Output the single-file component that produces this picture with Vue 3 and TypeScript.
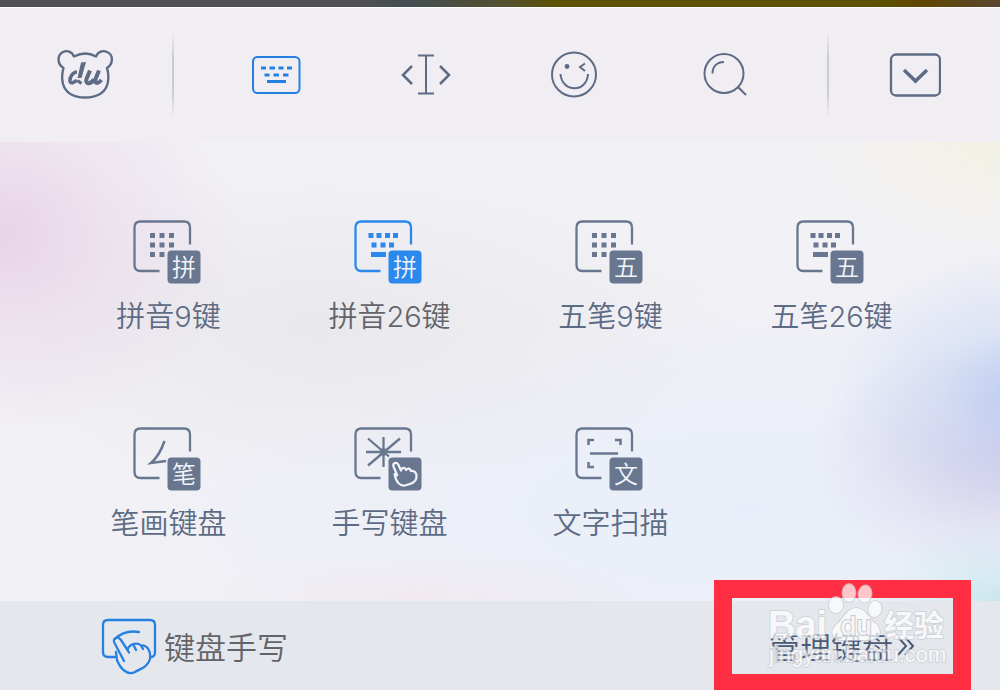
<script setup lang="ts">
type Glyph = 'nine' | 'full' | 'stroke' | 'star' | 'scan'

interface Mode {
  name: string
  glyph: Glyph
  badge: string
  active?: boolean
}

const modes: Mode[] = [
  { name: '拼音9键', glyph: 'nine', badge: '拼' },
  { name: '拼音26键', glyph: 'full', badge: '拼', active: true },
  { name: '五笔9键', glyph: 'nine', badge: '五' },
  { name: '五笔26键', glyph: 'full', badge: '五' },
  { name: '笔画键盘', glyph: 'stroke', badge: '笔' },
  { name: '手写键盘', glyph: 'star', badge: '' },
  { name: '文字扫描', glyph: 'scan', badge: '文' },
]
</script>

<template>
  <main class="keyboard">
    <div class="strip"></div>

    <nav class="toolbar" aria-label="工具栏">
      <button class="tool" aria-label="百度输入法">
        <svg width="58" height="52" viewBox="0 0 58 52" fill="none" stroke="currentColor">
          <path
            d="M17 7.500C25 3.500 32 3.500 39 7.500C41 2.500 46 1 50 3C57 6 56 15 50 19C51.500 24 52 29 50.500 35C47.500 45 38 48.500 28 48.500C18 48.500 9 45 6 35C4.500 29 5 24 6.500 19C0 15 0 6 6 3C10 1 15 2.500 17 7.500Z"
            stroke-width="2.400" stroke-linejoin="round" />
          <path d="M20 23C16 23 12.500 28 13 32C13.500 35 17 34 20 31" stroke-width="3.600" />
          <path d="M24 13.500L29 13L24.500 29H20.500Z" fill="currentColor" stroke="none" />
          <path d="M20.500 31.500L24.500 34.500" stroke-width="3" />
          <path d="M33 21.500L29.500 30C28 35 33 36 37 30.500M42 21.500L38.500 30C37 35 41 35 44.500 31" stroke-width="4" />
        </svg>
      </button>
      <span class="divider"></span>
      <div class="tools">
        <button class="tool active" aria-label="键盘">
          <svg width="50" height="40" viewBox="0 0 50 40" fill="none" stroke="currentColor">
            <rect x="2" y="2" width="46.500" height="36" rx="4.500" stroke-width="2" />
            <path d="M10 13h5M18.500 13h5.500M27.500 13h5M36 13h5M13.500 20h5M22.500 20h5.500M32 20h5.500" stroke-width="3" />
            <path d="M16 26.500h19" stroke-width="3" />
          </svg>
        </button>
        <button class="tool" aria-label="移动光标">
          <svg width="50" height="42" viewBox="0 0 50 42" fill="none" stroke="currentColor" stroke-width="2">
            <path d="M17 1.500h16M25 1.500v38M17 39.500h16" />
            <path d="M11 12L2 21L11 30M39 12L48 21L39 30" stroke-width="2.500" />
          </svg>
        </button>
        <button class="tool" aria-label="表情">
          <svg width="48" height="48" viewBox="0 0 48 48" fill="none" stroke="currentColor" stroke-width="2">
            <circle cx="23" cy="23.500" r="22" />
            <path d="M9.500 23C11 42 36 42 37 23" />
            <circle cx="16" cy="15.500" r="2.400" fill="currentColor" stroke="none" />
            <path d="M34 12.500L29 16L34 20" />
          </svg>
        </button>
        <button class="tool" aria-label="搜索">
          <svg width="44" height="44" viewBox="0 0 44 44" fill="none" stroke="currentColor" stroke-width="2">
            <circle cx="21" cy="20.500" r="19.500" />
            <path d="M9.500 20.500C9.500 13.500 14 9 21 9M35 34L43 42" />
          </svg>
        </button>
      </div>
      <span class="divider"></span>
      <button class="tool" aria-label="收起键盘">
        <svg width="52" height="44" viewBox="0 0 52 44" fill="none" stroke="currentColor">
          <rect x="2" y="1.500" width="49" height="41" rx="5" stroke-width="2.300" />
          <path d="M15 17L26.500 28L38 17" stroke-width="3.500" />
        </svg>
      </button>
    </nav>

    <section class="panel">
      <button v-for="mode in modes" :key="mode.name" class="mode" :class="{ active: mode.active }">
        <svg class="mode-icon" width="72" height="64" viewBox="0 0 72 64" fill="none" stroke="currentColor">
          <path d="M57 24.500V7.500Q57 1.500 51 1.500H7.500Q1.500 1.500 1.500 7.500V45Q1.500 51 7.500 51H26.500" stroke-width="2.300" />
          <path
            v-if="mode.glyph === 'nine'"
            d="M17 15.500h5M26.500 15.500h5M36 15.500h5M17 25h5M26.500 25h5M36 25h5M17 34.500h5M26.500 34.500h5"
            stroke-width="5" />
          <path
            v-else-if="mode.glyph === 'full'"
            d="M14.500 15.500h5M22.500 15.500h5M31 15.500h5M39 15.500h5M17.500 25h5M26.500 25h5M35 25h5M17 34.500h15"
            stroke-width="5" />
          <path v-else-if="mode.glyph === 'stroke'" d="M31.500 14C28 24 24 31 18 36L33 34" stroke-width="2.500" />
          <g v-else-if="mode.glyph === 'star'" stroke-width="2.300">
            <path d="M29.500 10V40M12 25H47M14 11.500L35 29.500M46 11.500L14 38.500" />
            <circle cx="29.500" cy="25" r="2.500" fill="currentColor" />
          </g>
          <path
            v-else
            d="M13.500 18V13H19M40 13H45.500V18M13.500 35V40H19M15 26.500H43"
            stroke-width="2.500" />
          <rect x="34.500" y="30.500" width="33" height="33" rx="4" fill="currentColor" stroke="none" />
          <text v-if="mode.badge" class="badge" x="51" y="56" text-anchor="middle">{{ mode.badge }}</text>
          <path
            v-else
            class="hand"
            d="M43.500 49L39.500 39.500C38.500 35.500 43 34.500 44.500 38L47 43.500C48 40 51 40 52 43C54 40.500 56 41.500 57 44C60 43 63 46 62.500 50C62 56 56 57 51 58.500C46 59.500 42 55 40.500 47L44 48.500" />
        </svg>
        <span>{{ mode.name }}</span>
      </button>
    </section>

    <footer class="footer">
      <button class="foot handwriting">
        <svg width="56" height="58" viewBox="0 0 56 58" fill="none" stroke="currentColor" stroke-width="2.300" stroke-linecap="round" stroke-linejoin="round">
          <path d="M14 40H7Q2 40 2 35V8Q2 3 7 3H49Q54 3 54 8V35Q54 40 50 40" />
          <path d="M14 22C20 16 29 13.500 38 15" />
          <path d="M23 44L13.500 26C11 21 17 18.500 20 23L26.500 33C28 27 36 25 40 28.500C47 28 50 35 49 42C47 50 39 52 34 55C26 59 19 51 16 43L15 35M26.500 33L28 35.500M33 29L35 33M40 28.500L42 32" />
        </svg>
        <span>键盘手写</span>
      </button>
      <button class="foot manage">
        <span>管理键盘</span>
        <svg width="18" height="22" viewBox="0 0 18 22" fill="none" stroke="currentColor" stroke-width="2">
          <path d="M1 2L9 11L1 20M8 2L16 11L8 20" />
        </svg>
      </button>
    </footer>

    <div class="highlight"></div>
    <svg class="watermark" width="184" height="96" viewBox="0 0 184 96" role="img" aria-label="Baidu 经验">
      <g class="mark">
        <text class="brand" x="3" y="60">Bai</text>
        <ellipse cx="71" cy="27" rx="7" ry="8" />
        <ellipse cx="84" cy="15" rx="6.500" ry="9" />
        <ellipse cx="100" cy="16" rx="6.500" ry="8.500" transform="rotate(8 100 16)" />
        <ellipse cx="110" cy="31" rx="6.500" ry="8" transform="rotate(12 110 31)" />
        <path d="M91 30C81 31 80 40 72 46C64 53 67 62 77 62H104C115 62 118 53 111 46C103 40 102 31 91 30Z" />
        <text class="cn" x="119" y="58">经验</text>
        <text class="url" x="4" y="84">jingyan.baidu.com</text>
      </g>
      <text class="du" x="91" y="57" text-anchor="middle">du</text>
    </svg>
  </main>
</template>

<style>
body {
  margin: 0;
}
</style>

<style scoped>
.keyboard {
  position: relative;
  display: flex;
  flex-direction: column;
  min-height: 100vh;
  overflow: hidden;
  color: #5d6b84;
  font-family: Inter, "Noto Sans CJK SC", sans-serif;
  font-weight: 350;
}
button {
  display: flex;
  align-items: center;
  justify-content: center;
  margin: 0;
  padding: 0;
  border: 0;
  background: none;
  color: inherit;
  font: inherit;
  cursor: pointer;
}
svg {
  display: block;
  flex: none;
}
.strip {
  height: 7px;
  background: linear-gradient(90deg, #505154 0 36%, #444d52 41%, #55502c 51%, #5c5200 56% 87%, #604700 92%, #5b4632);
}
.toolbar {
  display: grid;
  grid-template-columns: 172fr 2px 653fr 2px 171fr;
  height: 135px;
  box-sizing: border-box;
  border-top: 1px solid #fff;
  background: #f0eef3;
}
.tools {
  display: grid;
  grid-template-columns: repeat(4, 1fr);
  padding: 0 27px;
}
.divider {
  align-self: center;
  height: 86px;
  background: linear-gradient(transparent, #cbcace 30% 70%, transparent);
}
.active {
  color: #2680e2;
}
.panel {
  flex: 1;
  display: grid;
  grid-template-columns: repeat(4, 1fr);
  grid-auto-rows: 207px;
  padding: 42px 58px 0;
  background:
    radial-gradient(ellipse 240px 200px at 0 20%, #e8d3e7, rgba(232, 211, 231, 0.45) 45%, rgba(232, 211, 231, 0)),
    radial-gradient(ellipse 200px 150px at 103% 55%, #b9cbf1, rgba(190, 208, 244, 0.4) 45%, rgba(195, 213, 245, 0)),
    radial-gradient(ellipse 200px 110px at 100% 0, #f3f1e4, rgba(243, 241, 228, 0.5) 45%, rgba(243, 241, 228, 0)),
    radial-gradient(ellipse 130px 80px at 100% 100%, #c9e7ec, rgba(205, 234, 240, 0.5) 45%, rgba(205, 234, 240, 0)),
    radial-gradient(ellipse 190px 120px at 100% 69%, #d8cfe8, rgba(216, 207, 232, 0.45) 45%, rgba(216, 207, 232, 0)),
    radial-gradient(ellipse 420px 160px at 32% 40%, #e9e8ec, rgba(233, 232, 236, 0)),
    radial-gradient(ellipse 220px 50px at 42% 100%, #f1e9f0, rgba(241, 233, 240, 0)),
    radial-gradient(ellipse 700px 240px at 75% 80%, #e8eef9, rgba(232, 238, 249, 0)),
    #f2f1f5;
}
.mode {
  flex-direction: column;
  justify-content: flex-start;
  gap: 12px;
  padding-top: 36px;
  font-size: 29px;
  line-height: 42px;
}
.mode-icon {
  color: #68778f;
}
.mode.active {
  color: #626469;
}
.mode.active .mode-icon {
  color: #2b88ec;
}
.badge {
  fill: #f2f4f9;
  stroke: none;
  font-size: 24px;
}
.hand {
  stroke: #f2f4f9;
  stroke-width: 2.200;
  stroke-linejoin: round;
}
.footer {
  display: flex;
  justify-content: space-between;
  height: 89px;
  padding: 0 85px 0 101px;
  background: #e4e8ed;
  font-size: 31px;
}
.foot {
  gap: 7px;
}
.handwriting svg {
  color: #2680e2;
}
.handwriting span {
  color: #626469;
}
.manage {
  gap: 4px;
  color: #4b5a75;
}
.highlight {
  position: absolute;
  right: 29px;
  bottom: 0;
  width: 257px;
  height: 110px;
  box-sizing: border-box;
  border: 18px solid #ff2e43;
  border-bottom-width: 16px;
  pointer-events: none;
}
.watermark {
  position: absolute;
  right: 51px;
  bottom: 16px;
  pointer-events: none;
}
.mark {
  fill: #fff;
  stroke: #c9cdd3;
  stroke-width: 2;
  stroke-linejoin: round;
  paint-order: stroke;
  opacity: 0.72;
}
.brand {
  font-family: "Liberation Sans", sans-serif;
  font-size: 38px;
  font-weight: 700;
}
.cn {
  font-size: 30px;
  font-weight: 700;
}
.url {
  font-family: "Liberation Sans", sans-serif;
  font-size: 22px;
  font-weight: 400;
}
.du {
  fill: #f4f5f7;
  stroke: #c4c9d0;
  stroke-width: 2;
  paint-order: stroke;
  font-family: Inter, sans-serif;
  font-size: 26px;
  font-weight: 500;
}
</style>
